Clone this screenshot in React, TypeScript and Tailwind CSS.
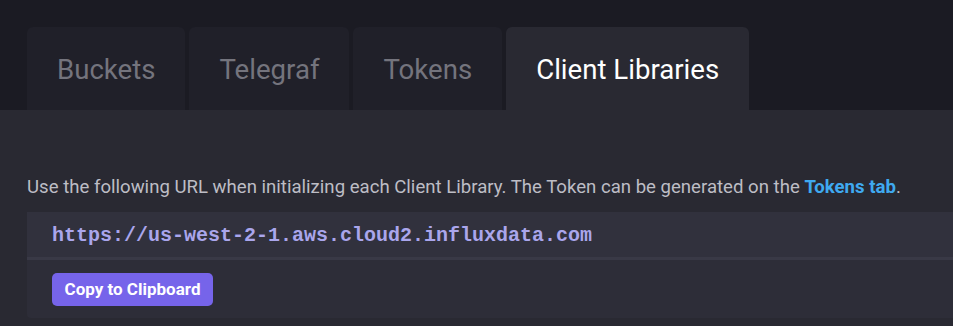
import React from "react";

const tabs = ["Buckets", "Telegraf", "Tokens", "Client Libraries"];

const App = () => {
  const active = "Client Libraries";

  return (
    <div className="w-[953px] h-[326px] overflow-hidden bg-[#1b1b23] font-['Roboto',sans-serif]">
      <div className="flex gap-[4px] pl-[27px] pt-[27px] h-[110px]">
        {tabs.map((t) => (
          <div
            key={t}
            className={
              t === active
                ? "flex items-center px-[30px] pt-[3px] rounded-t-[6px] bg-[#292932] text-white text-[27.6px]"
                : "flex items-center px-[30px] pt-[3px] rounded-t-[6px] bg-[#202029] text-[#74747d] text-[27.6px]"
            }
          >
            {t}
          </div>
        ))}
      </div>
      <div className="bg-[#292932] h-[216px] pt-[66px] pl-[27px]">
        <p className="text-[18.6px] text-[#bdbdc5] leading-[22px] mb-[14px] whitespace-nowrap">
          Use the following URL when initializing each Client Library. The Token can be generated on the{" "}
          <span className="font-bold text-[#3fa9f0]">Tokens tab</span>.
        </p>
        <div className="bg-[#2d2d38] rounded-tl-[4px] rounded-bl-[4px] w-[940px]">
          <div className="bg-[#31313d] h-[48px] flex items-center pl-[25px] pt-[3px] border-b-[3px] border-[#393946]">
            <span className="font-['Liberation_Mono',monospace] font-bold text-[20px] text-[#aaa6ec]">
              https://us-west-2-1.aws.cloud2.influxdata.com
            </span>
          </div>
          <div className="pl-[25px] pt-[13px] pb-[12px]">
            <button className="bg-[#7664ea] text-white font-bold text-[17px] rounded-[5px] w-[161px] h-[33px]">
              Copy to Clipboard
            </button>
          </div>
        </div>
      </div>
    </div>
  );
};

export default App;
